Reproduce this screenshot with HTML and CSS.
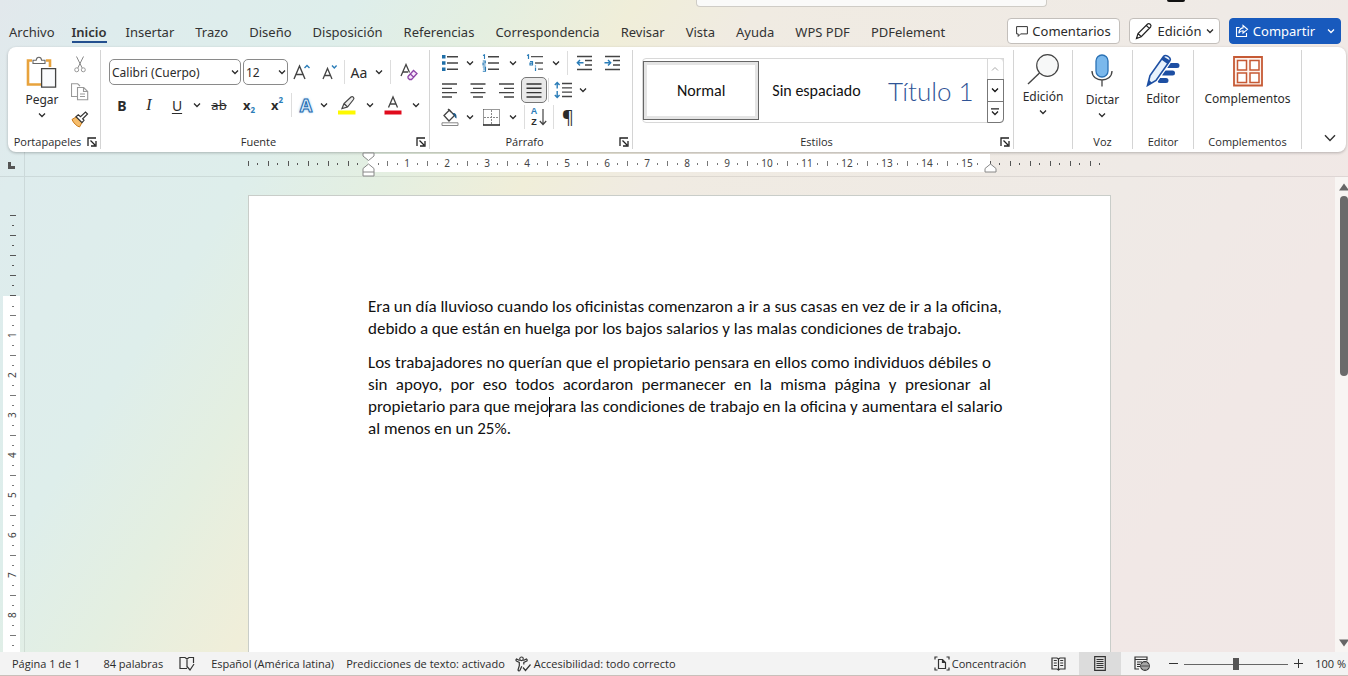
FILE: index.html
```html
<!DOCTYPE html>
<html lang="es">
<head>
<meta charset="utf-8">
<title>Documento</title>
<link rel="stylesheet" href="styles.css">
</head>
<body>
<svg class="defs" aria-hidden="true">
  <symbol id="chev" viewBox="0 0 8 8"><path d="M1 2.5 4 5.5 7 2.5" fill="none" stroke="currentColor" stroke-width="1.3"/></symbol>
  <symbol id="launch" viewBox="0 0 10 10"><path d="M1 9V1h8M3.5 3.5 8 8M9 4v5H4" fill="none" stroke="#222" stroke-width="1.3"/></symbol>
</svg>
<div class="app">
  <header class="titlebar">
    <div class="search"></div>
    <div class="avatar"></div>
  </header>

  <nav class="tabs">
    <a href="#">Archivo</a>
    <a href="#" class="active">Inicio</a>
    <a href="#">Insertar</a>
    <a href="#">Trazo</a>
    <a href="#">Diseño</a>
    <a href="#">Disposición</a>
    <a href="#">Referencias</a>
    <a href="#">Correspondencia</a>
    <a href="#">Revisar</a>
    <a href="#">Vista</a>
    <a href="#">Ayuda</a>
    <a href="#">WPS PDF</a>
    <a href="#">PDFelement</a>
    <div class="actions">
      <button class="action"><svg width="12" height="13" viewBox="0 0 12 13"><path d="M.6 1.6h10.8v7.3H4.6L2.2 11.4V8.9H.6z" fill="none" stroke="#333"/></svg>Comentarios</button>
      <button class="action edit"><svg width="18" height="18" viewBox="0 0 18 18"><path d="M1.500 16.500 3 11.500 12.600 2c1.600-1.400 4.400 1 3 3L6.200 14.700zM11.300 3.300l3 3M3 11.500l3.200 3.200" fill="none" stroke="#222" stroke-width="1.200"/></svg>Edición<svg class="chev"><use href="#chev"/></svg></button>
      <button class="action share"><svg width="14" height="14" viewBox="0 0 14 14"><path d="M4.500 3.500H1.500v9h10V9M8 1.500l4.500 3.800L8 9V6.800C6 6.800 4.800 7.500 3.800 9.300 4 6.300 5.400 4.200 8 3.900z" fill="none" stroke="#fff" stroke-width="1.100"/></svg>Compartir<svg class="chev"><use href="#chev"/></svg></button>
    </div>
  </nav>

  <section class="ribbon">
    <div class="group g-clip">
      <div class="content">
        <button class="big"><svg width="31" height="32" viewBox="0 0 31 32"><path d="M6 4.500H2v24h13M20 4.500h4V11" fill="none" stroke="#e8a33d" stroke-width="2.600"/><path d="M7 7.500V4.200h3.200c.4-4 5-4 5.400 0H19v3.300z" fill="#fff" stroke="#666" stroke-width="1.100"/><path d="M15.600 12.600h14v18.500h-14z" fill="#fafbfd" stroke="#444" stroke-width="1.300"/></svg><span>Pegar</span><svg class="chev"><use href="#chev"/></svg></button>
        <div class="stack">
          <button aria-label="Cortar"><svg width="12" height="17" viewBox="0 0 12 17"><path d="M2.500.5 8.200 12M9.500.5 3.800 12" fill="none" stroke="#888"/><circle cx="2.700" cy="13.800" r="2" fill="none" stroke="#999"/><circle cx="9.300" cy="13.800" r="2" fill="none" stroke="#999"/></svg></button>
          <button aria-label="Copiar"><svg width="18" height="18" viewBox="0 0 18 18"><path d="M6.500 13.500h-6V.8h6.200L9 3M6.500 4.500h6.200l4 4v8.300H6.500zM12.500 4.500v4h4.200M9 11h5M9 13.500h5" fill="none" stroke="#999" stroke-width="1.100"/></svg></button>
          <button aria-label="Copiar formato"><svg width="18" height="17" viewBox="0 0 18 17"><path d="M1 8.500 5 6l6 5.500L8.500 16C5.500 15 2.500 12 1 8.500z" fill="#f6bd6b" stroke="#c97a1a"/><path d="M5 5.800 7.300 3.800l2.200 1.800 5-4.600 2 2-4.800 4.700L13 9.300l-2 2.400z" fill="#fff" stroke="#333" stroke-width="1.200"/></svg></button>
        </div>
      </div>
      <footer><span>Portapapeles</span><button aria-label="Opciones de portapapeles"><svg class="launch"><use href="#launch"/></svg></button></footer>
    </div>

    <div class="group g-font">
      <div class="content rows">
        <div class="row">
          <span class="pick wide"><select aria-label="Fuente"><option>Calibri (Cuerpo)</option></select><svg class="chev"><use href="#chev"/></svg></span>
          <span class="pick"><select aria-label="Tamaño"><option>12</option></select><svg class="chev"><use href="#chev"/></svg></span>
          <button aria-label="Aumentar"><svg width="18" height="18" viewBox="0 0 18 18"><path d="M1 16 6.500 3 12 16M3 11.500h7" fill="none" stroke="#444" stroke-width="1.400"/><path d="M11.500 5 14 2.500 16.500 5" fill="none" stroke="#2b7db8" stroke-width="1.400"/></svg></button>
          <button aria-label="Disminuir"><svg width="16" height="18" viewBox="0 0 16 18"><path d="M1 16 5.500 5.500 10 16M2.500 12.500h6" fill="none" stroke="#444" stroke-width="1.300"/><path d="M10 2.500 12.300 5 14.600 2.500" fill="none" stroke="#2b7db8" stroke-width="1.400"/></svg></button>
          <i class="sep"></i>
          <button class="txt case">Aa</button><button class="drop" aria-label="Más"><svg class="chev"><use href="#chev"/></svg></button>
          <i class="sep gap"></i>
          <button aria-label="Borrar formato"><svg width="18" height="18" viewBox="0 0 18 18"><path d="M1 13 6 1.500 9.500 9.500M3 9h5" fill="none" stroke="#444" stroke-width="1.300"/><path d="M8 13.500 13.500 7.500 17 10.500 11.500 16.500H9.500L8 15zM10.300 11l3.500 3.200" fill="#f6e8fa" stroke="#8f45a8" stroke-width="1.300"/></svg></button>
        </div>
        <div class="row">
          <button class="txt b">B</button>
          <button class="txt i">I</button>
          <button class="txt u">U</button><button class="drop" aria-label="Más"><svg class="chev"><use href="#chev"/></svg></button>
          <button class="txt s">ab</button>
          <button class="txt x">x<sub>2</sub></button>
          <button class="txt x">x<sup>2</sup></button>
          <i class="sep"></i>
          <button class="txt fx" aria-label="Efectos de texto">A</button><button class="drop" aria-label="Más"><svg class="chev"><use href="#chev"/></svg></button>
          <button class="ink" aria-label="Resaltado"><svg width="18" height="20" viewBox="0 0 18 20"><path d="M4 13.500 6 8.500 13 2c1.500-1.200 3.800.7 2.500 2.500L9.500 12 4 13.500zM6 8.500l3.500 3.500" fill="#eee" stroke="#444" stroke-width="1.200"/><path d="M0 15.500h17.500v4H0z" fill="#fdf900"/></svg></button><button class="drop" aria-label="Más"><svg class="chev"><use href="#chev"/></svg></button>
          <button class="ink" aria-label="Color de fuente"><svg width="18" height="20" viewBox="0 0 18 20"><path d="M4.500 12.500 9 2l4.500 10.500M6 9h6" fill="none" stroke="#444" stroke-width="1.300"/><path d="M.5 15.500h17v4H.5z" fill="#e00b1c"/></svg></button><button class="drop" aria-label="Más"><svg class="chev"><use href="#chev"/></svg></button>
        </div>
      </div>
      <footer><span>Fuente</span><button aria-label="Opciones de fuente"><svg class="launch"><use href="#launch"/></svg></button></footer>
    </div>

    <div class="group g-para">
      <div class="content rows tight">
        <div class="row">
          <button aria-label="Viñetas"><svg width="18" height="18" viewBox="0 0 18 18"><path d="M1 1h3.500v3.500H1zM1 7.200h3.500v3.500H1zM1 13.500h3.500V17H1z" fill="#1f6fa8"/><path d="M6 2.700h11M6 9h11M6 15.200h11" stroke="#444" stroke-width="1.400"/></svg></button><button class="drop" aria-label="Más"><svg class="chev"><use href="#chev"/></svg></button>
          <button class="mid" aria-label="Numeración"><svg width="18" height="18" viewBox="0 0 18 18"><path d="M1 1.500 2.500.8V5M.8 7h2.500v2H1v2h2.600M.8 13h2.700v4.200H.8M1.200 15h2" fill="none" stroke="#2b7db8" stroke-width="1.100"/><path d="M6 2.700h11M6 9h11M6 15.200h11" stroke="#444" stroke-width="1.400"/></svg></button><button class="drop more" aria-label="Más"><svg class="chev"><use href="#chev"/></svg></button>
          <button class="mid" aria-label="Multinivel"><svg width="18" height="18" viewBox="0 0 18 18"><path d="M1 1.500 2.500.8V5M4 7.500h2.500V11H4V9.200h2.500M9.500 13.500V17M9.500 11.500v1" fill="none" stroke="#2b7db8" stroke-width="1.200"/><path d="M5 2.700h12M9 9h8M12 15.200h5" stroke="#555" stroke-width="1.300"/></svg></button><button class="drop" aria-label="Más"><svg class="chev"><use href="#chev"/></svg></button>
          <i class="sep wide"></i>
          <button aria-label="Reducir sangría"><svg width="17" height="16" viewBox="0 0 17 16"><path d="M1 1.500h15M9 5.500h7M9 10h7M1 14.500h15" stroke="#444" stroke-width="1.400"/><path d="M7.500 7.800h-6M4 5 1.300 7.800 4 10.500" fill="none" stroke="#2b7db8" stroke-width="1.400"/></svg></button>
          <button aria-label="Aumentar sangría"><svg width="17" height="16" viewBox="0 0 17 16"><path d="M1 1.500h15M9 5.500h7M9 10h7M1 14.500h15" stroke="#444" stroke-width="1.400"/><path d="M.5 7.800h6M4 5l2.700 2.800L4 10.500" fill="none" stroke="#2b7db8" stroke-width="1.400"/></svg></button>
        </div>
        <div class="row">
          <button aria-label="Izquierda"><svg width="16" height="15" viewBox="0 0 16 15"><path d="M0 1h15M0 5.300h10M0 9.600h15M0 14h10" stroke="#444" stroke-width="1.300"/></svg></button>
          <button aria-label="Centrar"><svg width="16" height="15" viewBox="0 0 16 15"><path d="M.5 1h15M3 5.300h10M.5 9.600h15M3 14h10" stroke="#444" stroke-width="1.300"/></svg></button>
          <button aria-label="Derecha"><svg width="16" height="15" viewBox="0 0 16 15"><path d="M1 1h15M6 5.300h10M1 9.600h15M6 14h10" stroke="#444" stroke-width="1.300"/></svg></button>
          <button class="on" aria-label="Justificar"><svg width="16" height="15" viewBox="0 0 16 15"><path d="M.5 1h15M.5 5.300h15M.5 9.600h15M.5 14h15" stroke="#333" stroke-width="1.400"/></svg></button>
          <i class="sep"></i>
          <button aria-label="Interlineado"><svg width="18" height="18" viewBox="0 0 18 18"><path d="M8 2.500h10M8 6.800h10M8 11.100h10M8 15.500h10" stroke="#444" stroke-width="1.300"/><path d="M3.200 1.500v6M.8 4 3.200 1.500 5.600 4M3.200 10v6.500M.8 14l2.400 2.500L5.600 14" fill="none" stroke="#2b7db8" stroke-width="1.400"/></svg></button><button class="drop" aria-label="Más"><svg class="chev"><use href="#chev"/></svg></button>
        </div>
        <div class="row">
          <button aria-label="Sombreado"><svg width="18" height="18" viewBox="0 0 18 18"><path d="M3 7.500 8.500 2l5 5.500L8 13zM7 1l3 3" fill="none" stroke="#444" stroke-width="1.300"/><path d="M11.500 5c2.500-.5 4.500 1 4 5.500-1.800-.8-2.200-2-2-3z" fill="#1d5a8a"/><path d="M1 14.800h16v2.700H1z" fill="#fff" stroke="#888"/></svg></button><button class="drop" aria-label="Más"><svg class="chev"><use href="#chev"/></svg></button>
          <button class="mid" aria-label="Bordes"><svg width="17" height="17" viewBox="0 0 17 17"><path d="M.5 .5h16v15M.5 .5v15" fill="none" stroke="#333" stroke-dasharray="1 1"/><path d="M8.500 1v14M1 8.500h15" fill="none" stroke="#888" stroke-dasharray="2 1"/><path d="M0 16h17" stroke="#222" stroke-width="1.500"/></svg></button><button class="drop more" aria-label="Más"><svg class="chev"><use href="#chev"/></svg></button>
          <i class="sep pad"></i>
          <button class="sort" aria-label="Ordenar"><span><b>A</b><b>Z</b></span><svg width="8" height="17" viewBox="0 0 8 17"><path d="M4 0v15.500M.8 12 4 15.500 7.200 12" fill="none" stroke="#444" stroke-width="1.200"/></svg></button>
          <i class="sep"></i>
          <button class="txt pil">¶</button>
        </div>
      </div>
      <footer><span>Párrafo</span><button aria-label="Opciones de párrafo"><svg class="launch"><use href="#launch"/></svg></button></footer>
    </div>

    <div class="group g-style">
      <div class="content">
        <div class="gallery">
          <button class="style current">Normal</button>
          <button class="style">Sin espaciado</button>
          <button class="style title">Título 1</button>
          <div class="spin">
            <button class="off" aria-label="Anterior"><svg width="8" height="8" viewBox="0 0 8 8"><path d="M1 5.500 4 2.500 7 5.500" fill="none" stroke="#aaa"/></svg></button>
            <button aria-label="Siguiente"><svg class="chev"><use href="#chev"/></svg></button>
            <button aria-label="Más estilos"><svg width="8" height="8" viewBox="0 0 8 8"><path d="M0 .8h8M1 3.500 4 6.500 7 3.500" fill="none" stroke="#222" stroke-width="1.300"/></svg></button>
          </div>
        </div>
      </div>
      <footer><span>Estilos</span><button aria-label="Opciones de estilos"><svg class="launch"><use href="#launch"/></svg></button></footer>
    </div>

    <div class="group g-edit">
      <div class="content">
        <button class="big"><svg width="32" height="31" viewBox="0 0 32 31"><circle cx="20.500" cy="11.500" r="10.800" fill="#f7f8f8" stroke="#444" stroke-width="1.200"/><path d="M12.500 19 1 30" stroke="#444" stroke-width="1.400"/></svg><span>Edición</span><svg class="chev"><use href="#chev"/></svg></button>
      </div>
      <footer></footer>
    </div>
    <div class="group g-voice">
      <div class="content">
        <button class="big"><svg width="22" height="34" viewBox="0 0 22 34"><rect x="5" y="1" width="12" height="22" rx="6" fill="#7ab8ec" stroke="#2b72b5" stroke-width="1.300"/><path d="M1 17c0 12 20 12 20 0M11 26v6.500" fill="none" stroke="#444" stroke-width="1.300"/></svg><span>Dictar</span><svg class="chev"><use href="#chev"/></svg></button>
      </div>
      <footer><span>Voz</span></footer>
    </div>
    <div class="group g-editor">
      <div class="content">
        <button class="big"><svg width="34" height="33" viewBox="0 0 34 33"><path d="M22 11.500h9M17 19h9.500M14 26.500h6" stroke="#1d4fa3" stroke-width="5" stroke-linecap="round"/><path d="M1.500 31.500 4 21.500 17.500 2.500c2-2.500 8 1 6.500 4L10 26.500z" fill="#e8f2fc" stroke="#fff" stroke-width="4"/><path d="M1.500 31.500 4 21.500 17.500 2.500c2-2.500 8 1 6.500 4L10 26.500z" fill="#e8f2fc" stroke="#1d4fa3" stroke-width="1.600"/><path d="M17.500 2.500 24 6.500l-2.500 3.500-6.200-4.400zM1.500 31.500l1.500-5.500 3 2.800z" fill="#1d4fa3"/></svg><span>Editor</span></button>
      </div>
      <footer><span>Editor</span></footer>
    </div>
    <div class="group g-addin">
      <div class="content">
        <button class="big"><svg width="30" height="31" viewBox="0 0 30 31"><g fill="none" stroke="#c65a35"><path d="M1 1h28v28.500H1z" stroke-width="1.800" fill="#fdf3ee"/><path d="M4.500 4.500h9v9.500h-9zM17 4.500h9V14h-9zM4.500 17h9v9.500h-9zM17 17h9v9.500h-9z" stroke-width="1.500" fill="#fff"/></g></svg><span>Complementos</span></button>
      </div>
      <footer><span>Complementos</span></footer>
    </div>
    <button class="collapse" aria-label="Contraer cinta"><svg width="12" height="8" viewBox="0 0 12 8"><path d="M1 1.200 6 6.500 11 1.200" fill="none" stroke="#333" stroke-width="1.400"/></svg></button>
  </section>

  <div class="hruler">
    <div class="corner"><svg width="7" height="7" viewBox="0 0 7 7"><path d="M0 0h3v4h4v3H0z" fill="#555"/></svg></div>
    <div class="track">
      <div class="margin"></div>
      <div class="scale">
        <svg class="mark first" width="13" height="25" viewBox="0 0 13 25"><path d="M1 1h11v3L6.500 8.500 1 4zM1 24V16.500L6.500 12 12 16.500V24zM1 20h11" fill="#fff" stroke="#888"/></svg>
        <i class="half"></i><b>1</b><b>2</b><b>3</b><b>4</b><b>5</b><b>6</b><b>7</b><b>8</b><b>9</b><b>10</b><b>11</b><b>12</b><b>13</b><b>14</b><b>15</b>
        <svg class="mark last" width="13" height="25" viewBox="0 0 13 25"><path d="M1 20V16.500L6.500 12 12 16.500V20z" fill="#fff" stroke="#888"/></svg>
      </div>
      <div class="margin"></div>
    </div>
  </div>

  <main class="work">
    <div class="vruler">
      <div class="margin"></div>
      <div class="scale"><i class="half"></i><b>1</b><b>2</b><b>3</b><b>4</b><b>5</b><b>6</b><b>7</b><b>8</b><b></b></div>
    </div>
    <div class="canvas">
      <article class="page">
        <p><span>Era un día lluvioso cuando los oficinistas comenzaron a ir a sus casas en vez de ir a la oficina,</span>
        <span class="end">debido a que están en huelga por los bajos salarios y las malas condiciones de trabajo.</span></p>
        <p><span>Los trabajadores no querían que el propietario pensara en ellos como individuos débiles o</span>
        <span>sin apoyo, por eso todos acordaron permanecer en la misma página y presionar al</span>
        <span>propietario para que mejo<i class="caret"></i>rara las condiciones de trabajo en la oficina y aumentara el salario</span>
        <span class="end">al menos en un 25%.</span></p>
      </article>
    </div>
    <div class="scrollbar">
      <svg width="10" height="8" viewBox="0 0 10 8"><path d="M5 .5 10 7.500H0z" fill="#666"/></svg>
      <div class="thumb"></div>
      <svg width="10" height="8" viewBox="0 0 10 8"><path d="M0 .5h10L5 7.500z" fill="#666"/></svg>
    </div>
  </main>

  <footer class="status">
    <span class="s-page">Página 1 de 1</span>
    <span>84 palabras</span>
    <svg class="s-proof" width="16" height="15" viewBox="0 0 16 15"><path d="M8 12.500H1V1.500h5l2 1.500 2-1.500h4.500V7M8 3v8.500M8 10.500l3 3.500 4-6" fill="none" stroke="#333" stroke-width="1.200"/></svg>
    <span class="s-lang">Español (América latina)</span>
    <span class="s-pred">Predicciones de texto: activado</span>
    <span class="s-acc"><svg width="17" height="16" viewBox="0 0 17 16"><circle cx="6.500" cy="2.800" r="1.800" fill="none" stroke="#333" stroke-width="1.100"/><path d="M4.700 4.500 1.500 3C.5 4 1 5 1.800 5.300L4.300 6.500v3.200L3 14c.5 1.200 1.500 1 2 .2l1.800-4M8.300 4.500l3.200-1.500c1.200.8.700 2-.2 2.300L8.800 6.500v2M8 11.500l2.500 3 5-6" fill="none" stroke="#333" stroke-width="1.200"/></svg>Accesibilidad: todo correcto</span>
    <span class="s-focus"><svg width="16" height="15" viewBox="0 0 16 15"><path d="M3.500 1H1v2.500M12.500 1H15v2.500M1 11.500V14h2.500M15 11.500V14h-2.500M4.500 3.500h4l3 3v6h-7zM8.500 3.500v3h3" fill="none" stroke="#333" stroke-width="1.200"/></svg>Concentración</span>
    <button class="view" aria-label="Modo lectura"><svg width="15" height="14" viewBox="0 0 15 14"><path d="M7.500 2 6 1H1v11h5l1.500 1L9 12h5V1H9zM7.500 2v11M2.800 3.500h3M2.800 6h3M2.800 8.500h3M9.200 3.500h3M9.200 6h3M9.200 8.500h3" fill="none" stroke="#333" stroke-width="1.200"/></svg></button>
    <button class="view on" aria-label="Diseño de impresión"><svg width="12" height="15" viewBox="0 0 12 15"><path d="M.7.700h10.600v13.600H.7zM2.500 3.500h7M2.500 5.500h7M2.500 7.500h7M2.500 9.500h7M2.500 11.500h7" fill="none" stroke="#333" stroke-width="1.200"/></svg></button>
    <button class="view" aria-label="Diseño web"><svg width="16" height="15" viewBox="0 0 16 15"><path d="M5 13H1V1h12v3.500M1 3.500h12M3 6h5M3 8.300h3M3 10.500h3" fill="none" stroke="#333" stroke-width="1.200"/><circle cx="11" cy="10" r="4.300" fill="#f3f3f3" stroke="#333" stroke-width="1.200"/><path d="M7 10h8M11 6v8M9 6.800v6.500M13 6.800v6.500" stroke="#333" stroke-width=".8" fill="none"/></svg></button>
    <div class="zoom">
      <button aria-label="Alejar"><svg width="9" height="9" viewBox="0 0 9 9"><path d="M0 4.500h9" stroke="#333"/></svg></button>
      <input type="range" min="0" max="100" value="50" aria-label="Zoom">
      <button aria-label="Acercar"><svg width="9" height="9" viewBox="0 0 9 9"><path d="M0 4.500h9M4.500 0v9" stroke="#333"/></svg></button>
    </div>
    <span class="s-zoom">100 %</span>
  </footer>
</div>
</body>
</html>
```
FILE: styles.css
```css
* { box-sizing: border-box; }
body {
  margin: 0;
  font-family: "Noto Sans", "Open Sans", sans-serif;
  font-size: 12px;
  color: #2b2b2b;
}
button {
  font: inherit;
  color: inherit;
  background: none;
  border: 0;
  padding: 0;
  display: flex;
  align-items: center;
  justify-content: center;
}
svg { flex: none; display: block; }
.defs { position: absolute; width: 0; height: 0; }
.chev { width: 8px; height: 8px; }
.launch { width: 10px; height: 10px; }

.app {
  height: 100vh;
  display: flex;
  flex-direction: column;
  overflow: hidden;
  background: linear-gradient(122deg, #e2e8ec 0%, #deeced 7%, #deeeeb 20%, #e4efe1 28%, #f0eed9 36%, #f0ebe2 43%, #efeae6 70%, #f1e8e6 84%, #f1e7e6 100%);
}

.titlebar { display: flex; height: 18px; flex: none; padding-left: 696px; align-items: flex-start; }
.search { width: 351px; height: 7px; background: #fafaf9; border: 1px solid #cfccc6; border-top: 0; border-radius: 0 0 4px 4px; }
.avatar { width: 18px; height: 2px; margin-left: 120px; background: #111; border-radius: 0 0 9px 9px; }

.tabs { display: flex; flex: none; height: 29px; gap: 21px; padding: 0 7px 0 9px; font-size: 13px; white-space: nowrap; }
.tabs a { color: #333; text-decoration: none; line-height: 20px; height: 25px; padding-top: 4px; }
.tabs .active { font-weight: 600; border-bottom: 2px solid #24508f; margin: 0 -2px 0 -4px; }
.actions { display: flex; gap: 9px; margin-left: auto; }
.action { height: 26px; gap: 4px; border: 1px solid #c3bfbb; border-radius: 4px; background: #fff; width: 113px; font-size: 13px; }
.action.edit { width: 91px; }
.action.share { width: 112px; background: #185abd; border-color: #185abd; color: #fff; }
.share .chev { margin-left: 8px; }

.ribbon {
  display: flex;
  flex: none;
  height: 105px;
  margin: 0 2px 0 8px;
  background: #fff;
  border-radius: 8px;
  box-shadow: 0 1px 3px #00000040;
}
.group { display: flex; flex-direction: column; margin: 3px 0; border-right: 1px solid #d4d4d4; }
.content { display: flex; flex: 1; justify-content: center; }
.group footer { display: flex; justify-content: center; align-items: center; height: 14px; font-family: "Open Sans", sans-serif; font-size: 11px; line-height: 14px; }
.group footer span { flex: 1; text-align: center; }
.g-clip footer, .g-font footer, .g-para footer, .g-style footer { padding-right: 3px; }
.g-clip { width: 93px; }
.g-font { width: 329px; }
.g-para { width: 203px; }
.g-style { width: 381px; }
.g-edit { width: 59px; }
.g-voice { width: 60px; }
.g-editor { width: 61px; }
.g-addin { width: 108px; }
.big { flex-direction: column; justify-content: flex-start; padding-top: 6px; gap: 3px; line-height: 18px; }
.g-edit .big, .g-voice .big, .g-editor .big { padding-top: 4px; }
.big .chev { margin-top: -1px; }
.g-clip .content { gap: 12px; padding-left: 6px; }
.stack { display: flex; flex-direction: column; gap: 10px; padding-top: 6px; align-items: center; }

.rows { flex-direction: column; justify-content: flex-start; padding: 9px 0 0 8px; gap: 7px; }
.rows.tight { padding: 0 0 0 6px; gap: 1px; }
.row { display: flex; height: 26px; align-items: center; }
.row button { width: 28px; height: 26px; }
.row .drop { width: 12px; }
.row .mid { width: 30px; }
.row .more { width: 14px; }
.row .ink { width: 34px; }
.row .on { width: 26px; margin: 0 1px; background: #e9e9e9; border: 1px solid #777; border-radius: 5px; }
.sep { width: 1px; height: 24px; background: #ddd; }
.sep.wide { margin: 0 2px 0 5px; }
.sep.gap { margin: 0 4px 0 5px; }
.sep.pad { margin: 0 0 0 4px; }
.pick { position: relative; width: 45px; }
.pick.wide { width: 132px; margin-right: 2px; }
.pick select {
  appearance: none;
  width: 100%;
  height: 26px;
  border: 1px solid #8a8a8a;
  border-radius: 5px;
  background: #fff;
  font: inherit;
  color: inherit;
  padding: 0 2px;
}
.pick .chev { position: absolute; right: 2px; top: 9px; }
.txt { font-size: 14px; }
.row .txt.b { font-weight: 700; width: 26px; }
.txt.i { font-family: "Liberation Serif", serif; font-style: italic; font-size: 16px; }
.txt.u { text-decoration: underline; text-underline-offset: 2px; }
.txt.s { text-decoration: line-through; font-size: 13px; }
.row .txt.s { width: 32px; }
.txt.x { font-weight: 700; font-size: 13px; }
.txt sub, .txt sup { font-size: 8px; color: #2b7db8; line-height: 8px; }
.txt sub { padding-top: 10px; }
.txt sup { padding-bottom: 10px; }
.row .txt.fx { width: 24px; margin-left: 2px; font-size: 18px; font-weight: 700; color: #d9ecfa; -webkit-text-stroke: 1px #1f6bb0; text-shadow: 0 0 3px #5aa9e6; }
.txt.pil { font-size: 18px; }
.sort { gap: 2px; }
.sort span { display: flex; flex-direction: column; font-family: "Liberation Sans", sans-serif; font-size: 9px; line-height: 11px; }
.sort b:first-child { color: #2b7db8; }

.g-style .content { padding: 8px 9px 0; }
.gallery { display: flex; width: 100%; height: 65px; border: 1px solid #d8d8d8; border-radius: 4px; font-family: Carlito, Lato, sans-serif; font-size: 16px; color: #111; }
.style { flex: 1; white-space: nowrap; }
.style.current { border: 1px solid #666; box-shadow: inset 0 0 0 3px #e4e4e4; margin: 2px 0; }
.style.title { font-family: Lato, sans-serif; font-weight: 300; font-size: 26px; color: #2f5496; }
.spin { display: flex; flex-direction: column; width: 17px; margin: -1px; }
.spin button { flex: 1; border: 1px solid #777; margin-top: -1px; }
.spin button.off { border-color: #d8d8d8; margin-top: 0; }
.spin button:last-child { border-radius: 0 0 4px 0; }
.collapse { width: 12px; height: 8px; margin: 87px 0 0 22px; }

.hruler { display: flex; flex: none; height: 25px; border-bottom: 1px solid #00000014; padding-right: 15px; }
.corner { width: 25px; padding: 10px 0 0 8px; border-right: 1px solid #00000014; }
.track { flex: 1; display: flex; justify-content: center; padding: 2px 0 4px; }
.hruler .margin {
  width: 120px;
  background: repeating-linear-gradient(90deg, #555 0 1px, transparent 1px 20px) 0 7px / 100% 5px no-repeat,
    repeating-linear-gradient(90deg, transparent 0 9px, #555 9px 10px, transparent 10px 20px) 0 9px / 100% 2px no-repeat;
}
.hruler .scale { display: flex; position: relative; width: 622px; background: #fff; }
.scale b {
  width: 40px;
  font-weight: 400;
  font-size: 10px;
  line-height: 18px;
  text-align: center;
  color: #444;
  background: linear-gradient(#777, #777) 0 7px / 1px 5px no-repeat,
    linear-gradient(#777, #777) 10px 9px / 1px 2px no-repeat,
    linear-gradient(#777, #777) 30px 9px / 1px 2px no-repeat;
}
.scale .half { width: 19px; background: linear-gradient(#777, #777) 10px 9px / 1px 2px no-repeat; }
.mark { position: absolute; top: -2px; }
.mark.first { left: -6px; }
.mark.last { right: -7px; }

.work { display: flex; flex: 1; min-height: 0; }
.vruler { width: 25px; border-right: 1px solid #00000014; padding: 38px 4px 0 3px; display: flex; flex-direction: column; overflow: hidden; }
.vruler .margin {
  height: 81px;
  flex: none;
  background: repeating-linear-gradient(#555 0 1px, transparent 1px 20px) 7px 0 / 6px 100% no-repeat,
    repeating-linear-gradient(transparent 0 10px, #555 10px 11px, transparent 11px 20px) 9px 0 / 2px 100% no-repeat;
}
.vruler .scale { flex: 1; background: #fff; min-height: 0; }
.vruler .half { display: block; width: auto; height: 19px; background: linear-gradient(#777, #777) 9px 10px / 2px 1px no-repeat; }
.vruler b {
  display: block;
  width: 18px;
  height: 40px;
  writing-mode: vertical-rl;
  transform: rotate(180deg);
  background: linear-gradient(#777, #777) 5px 39px / 6px 1px no-repeat,
    linear-gradient(#777, #777) 7px 9px / 2px 1px no-repeat,
    linear-gradient(#777, #777) 7px 29px / 2px 1px no-repeat;
}
.canvas { flex: 1; display: flex; justify-content: center; padding: 18px 1px 0 0; overflow: hidden; }
.page { width: 863px; min-height: 1100px; background: #fff; border: 1px solid #c9cdc9; padding: 100px 119px; font-family: Carlito, Lato, sans-serif; font-size: 17px; line-height: 22px; color: #111; }
.page p { margin: 0 0 12px; }
.page span { display: block; text-align: justify; text-align-last: justify; white-space: nowrap; }
.page span.end { text-align-last: left; }
.caret { display: inline-block; width: 1px; height: 20px; margin-right: -1px; vertical-align: -5px; background: #000; }
.scrollbar { width: 13px; background: #f8f5f3; display: flex; flex-direction: column; align-items: flex-end; padding: 6px 0 5px; overflow: hidden; }
.scrollbar svg { margin-right: -1px; }
.thumb { width: 8px; height: 180px; margin: 5px 0 auto; border-radius: 4px; background: #6b6b6b; }

.status { display: flex; flex: none; align-items: center; height: 24px; background: #f3f3f3; border-bottom: 1px solid #c9bfba; font-family: "Open Sans", sans-serif; font-size: 11px; padding: 0 2px 0 12px; white-space: nowrap; }
.s-page { margin-right: 23px; }
.s-proof { margin: 0 16px; }
.s-lang { margin-right: 12px; }
.s-pred { margin-right: 10px; }
.s-acc, .s-focus { display: flex; align-items: center; gap: 2px; }
.s-focus { margin-left: auto; margin-right: 11px; }
.view { width: 42px; height: 23px; }
.view.on { background: #dcdcdc; }
.zoom { display: flex; align-items: center; gap: 6px; margin: 0 12px 0 6px; }
.zoom input { appearance: none; width: 104px; height: 12px; margin: 0; background: linear-gradient(#666, #666) 0 6px / 100% 1px no-repeat; }
.zoom input::-webkit-slider-thumb { appearance: none; width: 6px; height: 12px; background: #555; }
```
